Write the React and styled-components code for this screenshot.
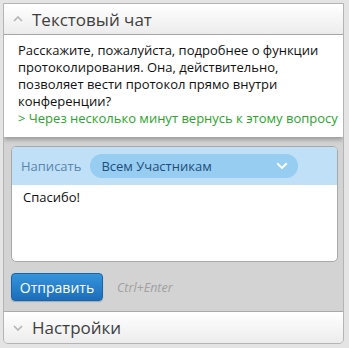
import styled, { createGlobalStyle } from 'styled-components';

const Global = createGlobalStyle`
  html, body { margin: 0; padding: 0; }
  body {
    background: #e4e4e4;
    font-family: "Open Sans", "Noto Sans", sans-serif;
    width: 349px; height: 348px; overflow: hidden;
  }
`

const Panel = styled.div`
  margin: 3px 5px 0 3px;
  width: 339px;
  border: 1px solid #b4b4b4;
  border-radius: 0 0 5px 5px;
  background: #d4d4d4;
  overflow: hidden;
`
const SectionHead = styled.div`
  display: flex; align-items: center; gap: 9px;
  height: ${p => p.$top ? '30px' : '31px'};
  padding-left: 9px;
  background: linear-gradient(#ffffff, #ececec);
  border-bottom: ${p => p.$top ? '1px solid #a8a8a8' : '0'};
  color: #3f3f3f;
  font-size: 17px;
  svg { flex: none; }
`
const Messages = styled.div`
  background: #fff;
  padding: 7px 4px 10px 14px;
  font-size: 13px;
  line-height: 17px;
  color: #111;
  box-shadow: 0 3px 4px rgba(0,0,0,0.25);
  position: relative;
`
const Reply = styled.div`
  color: #2ba52b;
`
const Body = styled.div`
  padding: 9px 5px 10px 7px;
  background: #d3d3d3;
  border-bottom: 1px solid #a9a9a9;
`
const Compose = styled.div`
  border: 1px solid #a8a8a8;
  border-radius: 5px;
  overflow: hidden;
  background: #fff;
`
const ComposeBar = styled.div`
  display: flex; align-items: center; gap: 9px;
  height: 38px;
  padding-left: 9px;
  background: #bfe0f6;
  color: #5886ad;
  font-size: 13px;
`
const Select = styled.div`
  display: flex; align-items: center; justify-content: space-between;
  width: 187px; height: 24px;
  padding: 0 10px 0 11px;
  border-radius: 12px;
  background: #97cdf0;
  color: #1d4d7c;
  font-size: 13px;
`
const Input = styled.div`
  height: 66px;
  padding: 4px 11px 6px;
  font-size: 13px;
  line-height: 17px;
  color: #111;
`
const Actions = styled.div`
  display: flex; align-items: center; gap: 14px;
  margin-top: 11px;
`
const SendButton = styled.button`
  width: 92px; height: 28px;
  border: 1px solid #1565a8;
  border-radius: 4px;
  background: linear-gradient(#3594db, #1c6dbb);
  color: #fff;
  font-family: inherit;
  font-size: 14px;
  padding: 0;
  box-shadow: 0 1px 1px rgba(0,0,0,0.2);
`
const Hint = styled.span`
  color: #a0a0a0;
  font-style: italic;
  font-size: 12.5px;
`

const Chevron = ({ up, color = '#b4b4b4', size = 10 }) => (
  <svg width={size} height={size * 0.6} viewBox="0 0 10 6">
    <path d={up ? 'M1 5 L5 1 L9 5' : 'M1 1 L5 5 L9 1'} fill="none" stroke={color} strokeWidth="1.6" />
  </svg>
)

export default function App() {
  return (
    <>
      <Global />
      <Panel>
        <SectionHead $top>
          <Chevron up />
          Текстовый чат
        </SectionHead>
        <Messages>
          Расскажите, пожалуйста, подробнее о функции протоколирования. Она, действительно, позволяет вести протокол прямо внутри конференции?
          <Reply>&gt; Через несколько минут вернусь к этому вопросу</Reply>
        </Messages>
        <Body>
          <Compose>
            <ComposeBar>
              Написать
              <Select>
                Всем Участникам
                <Chevron color="#fff" size={12} />
              </Select>
            </ComposeBar>
            <Input>Спасибо!</Input>
          </Compose>
          <Actions>
            <SendButton>Отправить</SendButton>
            <Hint>Ctrl+Enter</Hint>
          </Actions>
        </Body>
        <SectionHead>
          <Chevron />
          Настройки
        </SectionHead>
      </Panel>
    </>
  )
}
